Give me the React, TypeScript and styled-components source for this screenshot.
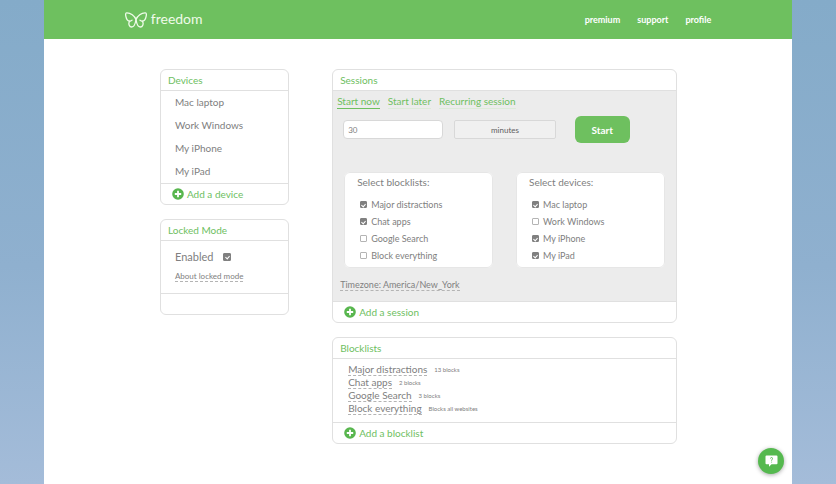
import React, { useState } from "react";
import styled, { createGlobalStyle } from "styled-components";

const green = "#6ec05f";
const grey = "#808080";
const line = "#e0e0e0";

const GlobalStyle = createGlobalStyle`
  *, *::before, *::after { box-sizing: border-box; }
  body {
    margin: 0;
    font-family: Lato, "Open Sans", sans-serif;
    font-size: 10px;
    line-height: 12px;
    color: ${grey};
  }
  button, input, select { font: inherit; color: inherit; }
  ul { list-style: none; margin: 0; padding: 0; }
  a { color: inherit; text-decoration: none; }
`;

const Backdrop = styled.div`
  min-height: 100vh;
  display: flex;
  padding: 0 44px;
  background: linear-gradient(#84abc9, #8fb0cf 55%, #a4bcd9);
`;

const Page = styled.div`
  flex: 1;
  min-width: 0;
  background: #fff;
`;

const Header = styled.header`
  display: flex;
  align-items: center;
  justify-content: space-between;
  height: 39px;
  padding: 0 10.8%;
  background: ${green};
  color: #fff;
`;

const Brand = styled.a`
  display: flex;
  align-items: center;
  gap: 4px;
  font-size: 14px;
  line-height: 16px;
  color: #effbe9;
`;

const BrandName = styled.span`
  padding-bottom: 2px;
`;

const Nav = styled.nav`
  display: flex;
  gap: 17px;
  font-size: 9px;
  font-weight: 700;
`;

const Main = styled.main`
  display: grid;
  grid-template-columns: 3fr 8fr;
  column-gap: 43px;
  align-items: start;
  padding: 30px 15.4% 39px 15.5%;
`;

const Column = styled.div`
  display: grid;
  gap: 14px;
  min-width: 0;
`;

const Panel = styled.section`
  border: 1px solid ${line};
  border-radius: 6px;
  overflow: hidden;
`;

const PanelTitle = styled.h2`
  margin: 0;
  padding: 4px 7px;
  border-bottom: 1px solid ${line};
  font-size: 10px;
  font-weight: 400;
  color: ${green};
`;

const PanelFooter = styled.footer`
  min-height: 21px;
  padding: 4px 11px;
  border-top: 1px solid ${line};
`;

const AddButton = styled.button`
  display: flex;
  align-items: center;
  gap: 3px;
  padding: 0;
  border: 0;
  background: none;
  color: ${green};
  cursor: pointer;
`;

const DeviceItem = styled.li`
  padding: 5px 14px 6px;
`;

const LockedBody = styled.div`
  display: grid;
  justify-items: start;
  gap: 9px;
  padding: 10px 14px 11px;
`;

const LockLabel = styled.label`
  display: flex;
  align-items: center;
  gap: 10px;
  font-size: 11px;
`;

const DottedLink = styled.a<{ $size?: number }>`
  border-bottom: 1px dashed #b4b4b4;
  font-size: ${(p) => p.$size ?? 10}px;
  line-height: ${(p) => (p.$size ?? 10) + 1}px;
`;

const Checkbox = styled.input<{ $size?: number }>`
  appearance: none;
  display: grid;
  place-content: center;
  width: ${(p) => p.$size ?? 7}px;
  height: ${(p) => p.$size ?? 7}px;
  margin: 0;
  border: 1px solid #b4b4b4;
  border-radius: 1px;
  background: #fff;

  &:checked {
    border-color: #808080;
    background: #808080;
  }

  &:checked::after {
    content: "";
    width: 3px;
    height: 4px;
    border: solid #fff;
    border-width: 0 1px 1px 0;
    transform: rotate(42deg);
  }
`;

const SessionBody = styled.div`
  padding: 4px 11px 10px;
  background: #ececec;
`;

const Tabs = styled.div`
  display: flex;
  gap: 8px;
  margin-left: -7px;
`;

const Tab = styled.button`
  padding: 0;
  border: 0;
  border-bottom: 1px solid #dcebd8;
  background: none;
  color: ${green};
  line-height: 13px;
  cursor: pointer;

  &[aria-selected="true"] { border-bottom-color: ${green}; }
`;

const StartForm = styled.form`
  display: grid;
  grid-template-columns: 100fr 101fr 63fr 28fr;
  align-items: center;
  column-gap: 11px;
  margin: 7px -4px 0 -1px;
`;

const Duration = styled.input`
  min-width: 0;
  height: 19px;
  padding: 0 4px;
  border: 1px solid #d8d8d8;
  border-radius: 4px;
  background: #fff;
  font-size: 8px;
`;

const Unit = styled.select`
  appearance: none;
  min-width: 0;
  height: 19px;
  padding: 0;
  border: 1px solid #d8d8d8;
  border-radius: 2px;
  background: #f0f0f0;
  font-size: 8px;
  text-align: center;
  text-align-last: center;
  color: #606060;
`;

const StartButton = styled.button`
  height: 27px;
  margin-left: 8px;
  padding: 0;
  border: 0;
  border-radius: 6px;
  background: ${green};
  color: #fff;
  font-weight: 700;
  cursor: pointer;
`;

const Cards = styled.div`
  display: grid;
  grid-template-columns: 1fr 1fr;
  gap: 23px;
  margin-top: 29px;
`;

const Card = styled.fieldset`
  min-width: 0;
  margin: 0;
  padding: 3px 12px;
  border: 1px solid #e6e6e6;
  border-radius: 6px;
  background: #fff;
`;

const CardTitle = styled.legend`
  float: left;
  width: 100%;
  margin-bottom: 8px;
  padding: 0;
`;

const Option = styled.label`
  clear: both;
  display: flex;
  align-items: center;
  gap: 4px;
  padding-left: 3px;
  font-size: 9px;
  line-height: 17px;
`;

const Timezone = styled.div`
  display: flex;
  margin: 12px 0 0 -4px;
`;

const Blocklists = styled.ul`
  padding: 4px 15px 7px;
`;

const BlocklistItem = styled.li`
  display: flex;
  align-items: center;
  gap: 7px;
  height: 13px;
`;

const Count = styled.span`
  font-size: 6px;
  line-height: 12px;
`;

const ChatButton = styled.button`
  position: fixed;
  right: 52px;
  bottom: 10px;
  display: grid;
  place-items: center;
  width: 26px;
  height: 26px;
  padding: 0;
  border: 0;
  border-radius: 50%;
  background: #55b94f;
  box-shadow: 0 1px 4px rgba(0, 0, 0, 0.35);
  cursor: pointer;
`;

const Butterfly = () => (
  <svg width="22" height="16" viewBox="0 0 22 16" fill="none" stroke="currentColor" strokeWidth="1.3" strokeLinecap="round" strokeLinejoin="round" aria-hidden="true">
    <path d="M11 7.500C9.600 4 5.600 .7 1.600 .9C.2 1 .6 3.200 1 4.800C1.500 7.400 2.600 9 4.800 9.100C2.900 11.400 4.200 15 6.800 15C9.600 15 10.400 11.200 11 7.500Z" />
    <path d="M11 7.500C12.400 4 16.400 .7 20.400 .9C21.800 1 21.400 3.200 21 4.800C20.500 7.400 19.400 9 17.200 9.100C19.100 11.400 17.800 15 15.200 15C12.400 15 11.600 11.200 11 7.500Z" />
    <path d="M4.800 9.100C5.900 9.200 6.600 8.800 7.100 8.200M17.200 9.100C16.100 9.200 15.400 8.800 14.900 8.200" />
  </svg>
);

const PlusIcon = () => (
  <svg width="12" height="12" viewBox="0 0 12 12" aria-hidden="true">
    <circle cx="6" cy="6" r="5.800" fill="#58b64e" />
    <path d="M6 2.800V9.200M2.800 6H9.200" stroke="#fff" strokeWidth="1.800" />
  </svg>
);

const ChatIcon = () => (
  <svg width="13" height="12" viewBox="0 0 13 12" aria-hidden="true">
    <path d="M1.500 .5H11.500Q12.500 .5 12.500 1.500V8.200Q12.500 9.200 11.500 9.200H6.500L4 11.700V9.200H1.500Q.5 9.200 .5 8.200V1.500Q.5 .5 1.500 .5Z" fill="#fff" />
    <path d="M5.500 3.500Q5.600 2.500 6.600 2.500Q7.600 2.600 7.500 3.600Q7.400 4.300 6.600 5V5.700M6.600 6.700V7.500" fill="none" stroke="#55b94f" strokeWidth=".9" />
  </svg>
);

const Add = ({ children }: { children: React.ReactNode }) => (
  <AddButton type="button">
    <PlusIcon />
    {children}
  </AddButton>
);

const devices = ["Mac laptop", "Work Windows", "My iPhone", "My iPad"];
const blocklists = [
  { name: "Major distractions", detail: "13 blocks" },
  { name: "Chat apps", detail: "2 blocks" },
  { name: "Google Search", detail: "3 blocks" },
  { name: "Block everything", detail: "Blocks all websites" },
];
const tabs = ["Start now", "Start later", "Recurring session"];

const Choices = ({ title, names, initial }: { title: string; names: string[]; initial: string[] }) => (
  <Card>
    <CardTitle>{title}</CardTitle>
    {names.map((name) => (
      <Option key={name}>
        <Checkbox type="checkbox" defaultChecked={initial.includes(name)} />
        {name}
      </Option>
    ))}
  </Card>
);

export default function App() {
  const [tab, setTab] = useState(tabs[0]);

  return (
    <Backdrop>
      <GlobalStyle />
      <Page>
        <Header>
          <Brand href="#">
            <Butterfly />
            <BrandName>freedom</BrandName>
          </Brand>
          <Nav>
            <a href="#premium">premium</a>
            <a href="#support">support</a>
            <a href="#profile">profile</a>
          </Nav>
        </Header>
        <Main>
          <Column>
            <Panel>
              <PanelTitle>Devices</PanelTitle>
              <ul>
                {devices.map((name) => (
                  <DeviceItem key={name}>{name}</DeviceItem>
                ))}
              </ul>
              <PanelFooter>
                <Add>Add a device</Add>
              </PanelFooter>
            </Panel>
            <Panel>
              <PanelTitle>Locked Mode</PanelTitle>
              <LockedBody>
                <LockLabel>
                  Enabled
                  <Checkbox type="checkbox" $size={8} defaultChecked />
                </LockLabel>
                <DottedLink $size={8} href="#locked-mode">About locked mode</DottedLink>
              </LockedBody>
              <PanelFooter />
            </Panel>
          </Column>
          <Column>
            <Panel>
              <PanelTitle>Sessions</PanelTitle>
              <SessionBody>
                <Tabs role="tablist">
                  {tabs.map((name) => (
                    <Tab key={name} type="button" role="tab" aria-selected={name === tab} onClick={() => setTab(name)}>
                      {name}
                    </Tab>
                  ))}
                </Tabs>
                <StartForm onSubmit={(e) => e.preventDefault()}>
                  <Duration aria-label="Duration" defaultValue="30" />
                  <Unit aria-label="Unit" defaultValue="minutes">
                    <option>minutes</option>
                    <option>hours</option>
                  </Unit>
                  <StartButton type="submit">Start</StartButton>
                </StartForm>
                <Cards>
                  <Choices
                    title="Select blocklists:"
                    names={blocklists.map((b) => b.name)}
                    initial={["Major distractions", "Chat apps"]}
                  />
                  <Choices
                    title="Select devices:"
                    names={devices}
                    initial={["Mac laptop", "My iPhone", "My iPad"]}
                  />
                </Cards>
                <Timezone>
                  <DottedLink $size={9} href="#timezone">Timezone: America/New_York</DottedLink>
                </Timezone>
              </SessionBody>
              <PanelFooter>
                <Add>Add a session</Add>
              </PanelFooter>
            </Panel>
            <Panel>
              <PanelTitle>Blocklists</PanelTitle>
              <Blocklists>
                {blocklists.map((b) => (
                  <BlocklistItem key={b.name}>
                    <DottedLink href="#blocklist">{b.name}</DottedLink>
                    <Count>{b.detail}</Count>
                  </BlocklistItem>
                ))}
              </Blocklists>
              <PanelFooter>
                <Add>Add a blocklist</Add>
              </PanelFooter>
            </Panel>
          </Column>
        </Main>
      </Page>
      <ChatButton type="button" aria-label="Help">
        <ChatIcon />
      </ChatButton>
    </Backdrop>
  );
}
